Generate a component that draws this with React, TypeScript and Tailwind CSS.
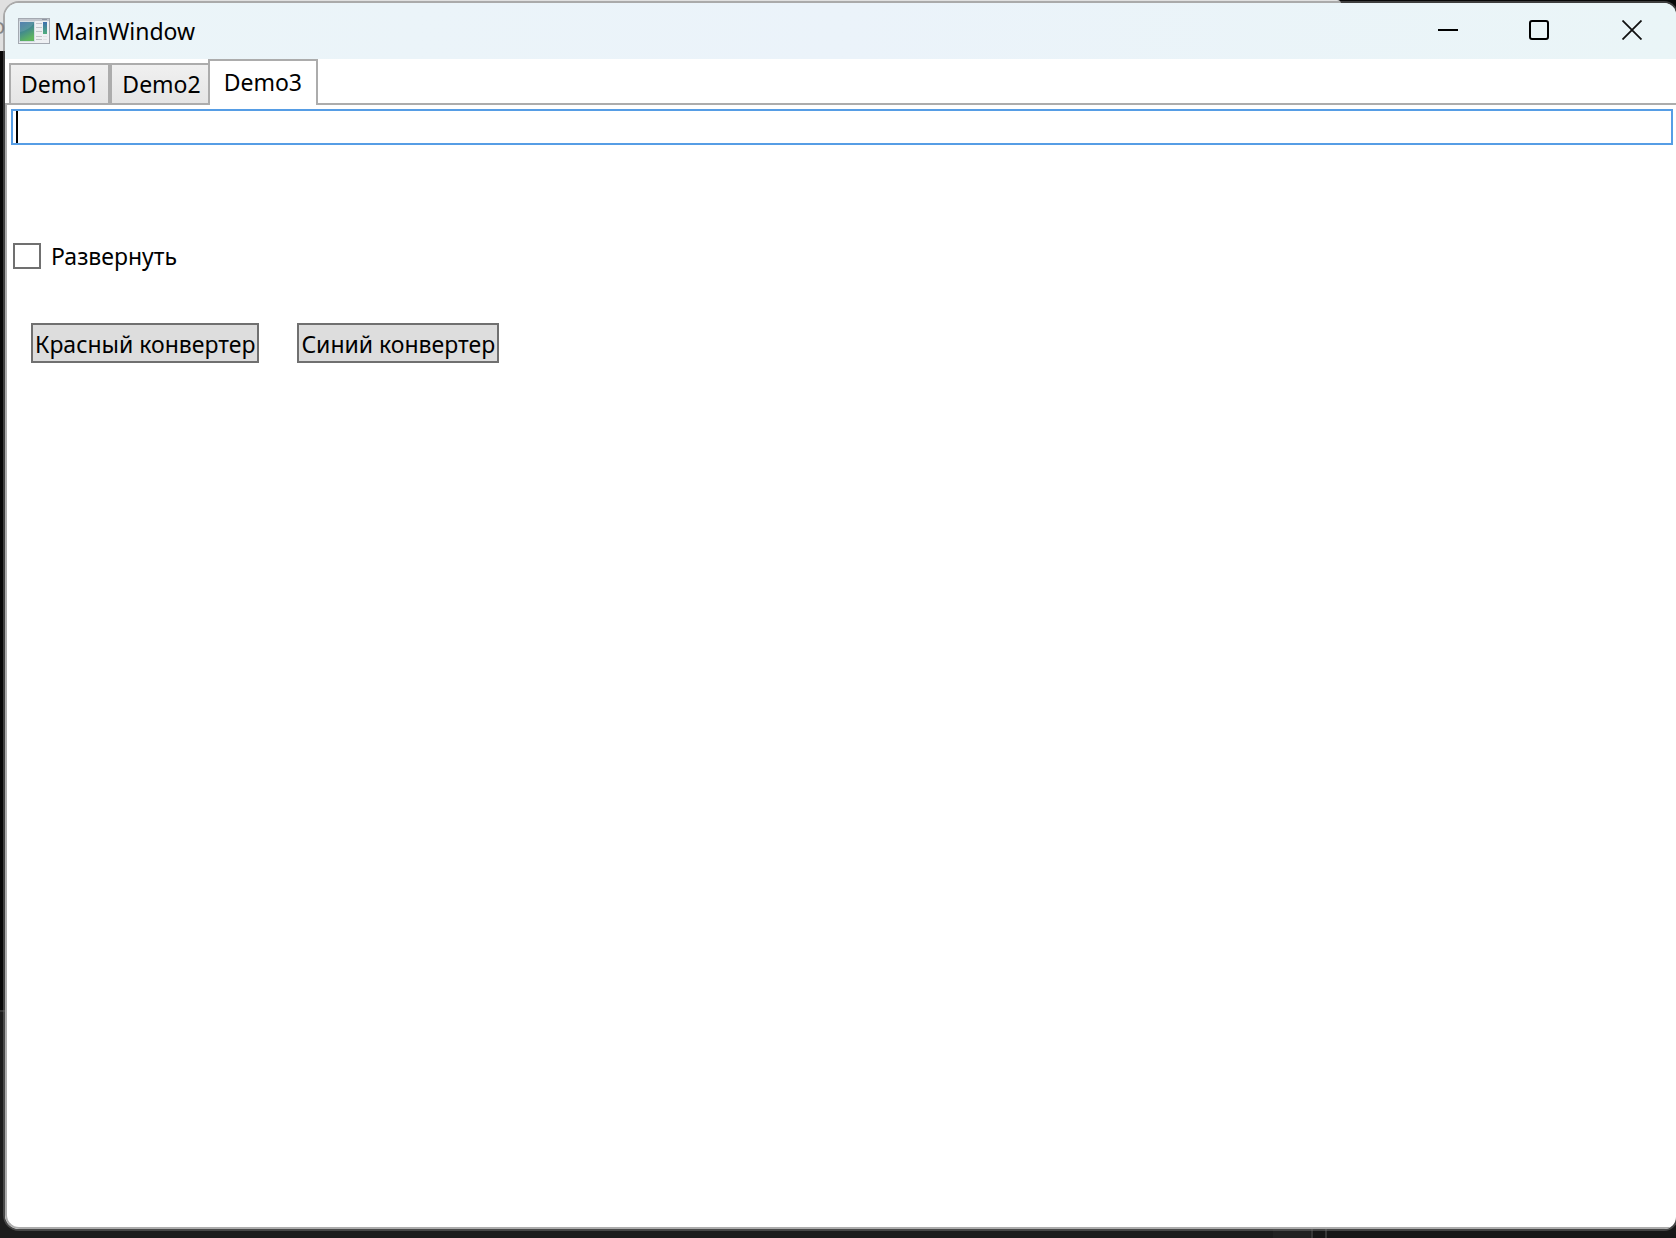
import React, { useState } from 'react';

const TABS = ['Demo1', 'Demo2', 'Demo3'];

const AppIcon: React.FC = () => (
  <svg width="32" height="26" viewBox="0 0 32 26" aria-hidden="true">
    <defs>
      <linearGradient id="pane" x1="0" y1="0" x2="0.4" y2="1">
        <stop offset="0" stopColor="#3d6fa6" />
        <stop offset="0.5" stopColor="#41898e" />
        <stop offset="1" stopColor="#5fb560" />
      </linearGradient>
      <linearGradient id="side" x1="0" y1="0" x2="0" y2="1">
        <stop offset="0" stopColor="#3f6fae" />
        <stop offset="1" stopColor="#4fae7c" />
      </linearGradient>
    </defs>
    <rect x="0.5" y="0.5" width="31" height="25" fill="#eef0f3" stroke="#a4a9b1" />
    <rect x="1" y="1" width="30" height="2" fill="#c3c7ce" />
    <rect x="24" y="1" width="5" height="1" fill="#8f96a3" />
    <rect x="1" y="3" width="16" height="21" fill="#d4dde4" />
    <rect x="2" y="4" width="14" height="19" fill="url(#pane)" />
    <path d="M2 14c5-1 11-4 14-9v-1H2z" fill="#fff" opacity="0.12" />
    <path d="M18 5.5h6M18 9.5h6M18 13.5h6M18 18.5h6M18 21.5h6" stroke="#c2c5ca" />
    <rect x="25" y="4" width="4" height="12" fill="url(#side)" />
    <path d="M25 18.5h4M25 21.5h4" stroke="#e0e2e5" />
  </svg>
);

const TitleBar: React.FC = () => (
  <header className="flex h-14 items-center justify-between bg-linear-to-r from-[#ebf5f8] via-[#ebf3fa] to-[#eaf5f7] pl-[13px]">
    <div className="flex items-center gap-1">
      <AppIcon />
      <h1 className="text-[23px] leading-8">MainWindow</h1>
    </div>
    <div className="flex h-full pb-0.5">
      <button type="button" aria-label="Minimize" className="flex w-[92px] items-center justify-center">
        <svg width="20" height="20" viewBox="0 0 20 20">
          <path d="M0 10h20" stroke="#000" strokeWidth="2" />
        </svg>
      </button>
      <button type="button" aria-label="Maximize" className="flex w-[90px] items-center justify-center">
        <svg width="20" height="20" viewBox="0 0 20 20">
          <rect x="1" y="1" width="18" height="18" rx="2" fill="none" stroke="#000" strokeWidth="2" />
        </svg>
      </button>
      <button type="button" aria-label="Close" className="flex w-[92px] items-center justify-center pl-1">
        <svg width="20" height="20" viewBox="0 0 20 20">
          <path d="M0.5 0.5l19 19M19.5 0.5l-19 19" stroke="#111" strokeWidth="1.8" />
        </svg>
      </button>
    </div>
  </header>
);

export default function App() {
  const [active, setActive] = useState('Demo3');
  const [text, setText] = useState('');
  const [expanded, setExpanded] = useState(false);

  return (
    <div className="relative flex h-screen overflow-hidden bg-[#1c1c1c] pt-[3px] pb-[9px] pl-[5px] font-['Noto_Sans','Open_Sans',sans-serif] text-[23px] text-black">
      {/* Windows behind this one */}
      <div className="absolute inset-x-0 top-0 h-[1012px] border-b-2 border-[#333] bg-[#080808]" />
      <div className="absolute top-0 left-0 h-[51px] w-4/5 rounded-tr-sm bg-[#e0e0e0]">
        <span className="absolute top-[9px] -left-2 text-[22px] leading-8 text-[#888]">o</span>
      </div>
      <div className="absolute right-0 bottom-0 flex h-3">
        <div className="w-10 border-r-2 border-[#383838] bg-[#222]" />
        <div className="w-3 bg-[#171717]" />
        <div className="w-[351px] border-l-2 border-[#383838] bg-[#171717]" />
      </div>

      <div className="relative flex grow flex-col overflow-hidden rounded-l-[14px] rounded-r-[12px] bg-white shadow-[0_0_0_2px_rgba(115,115,115,0.5)]">
        <TitleBar />

        <div role="tablist" className="relative -mb-0.5 flex items-end pl-1">
          {TABS.map((tab) => (
            <button
              key={tab}
              type="button"
              role="tab"
              aria-selected={tab === active}
              onClick={() => setActive(tab)}
              className={
                tab === active
                  ? 'relative -ml-1 h-[46px] border-2 border-b-0 border-[#acacac] bg-white px-3.5 pb-0.5 leading-8'
                  : 'h-[42px] border-2 border-[#acacac] bg-linear-to-b from-[#f0f0f0] to-[#e5e5e5] pr-[9px] pl-2.5 leading-8'
              }
            >
              {tab}
            </button>
          ))}
        </div>

        <main className="flex grow flex-col items-start rounded-bl-[14px] border-2 border-r-0 border-[#acacac] pt-1 pr-[3px] pl-1">
          <div className="relative w-full">
            <input
              type="text"
              aria-label="Text"
              value={text}
              onChange={(e) => setText(e.target.value)}
              className="block h-9 w-full border-2 border-[#569de5] bg-white px-1 caret-transparent outline-none"
            />
            {text === '' && <span className="absolute top-0.5 left-[5px] h-8 w-0.5 bg-black" />}
          </div>

          <label className="mt-[95px] ml-0.5 flex items-center gap-2.5 leading-8">
            <input
              type="checkbox"
              checked={expanded}
              onChange={(e) => setExpanded(e.target.checked)}
              className="h-[26px] w-7 appearance-none border-2 border-[#707070] bg-white checked:bg-[#707070]"
            />
            Развернуть
          </label>

          <div className="mt-[51px] ml-5 flex gap-[38px]">
            <button type="button" className="h-10 border-2 border-[#707070] bg-[#dddddd] px-0.5 pt-0.5 leading-8">
              Красный конвертер
            </button>
            <button type="button" className="h-10 border-2 border-[#707070] bg-[#dddddd] px-0.5 pt-0.5 leading-8">
              Синий конвертер
            </button>
          </div>
        </main>
      </div>
    </div>
  );
}
